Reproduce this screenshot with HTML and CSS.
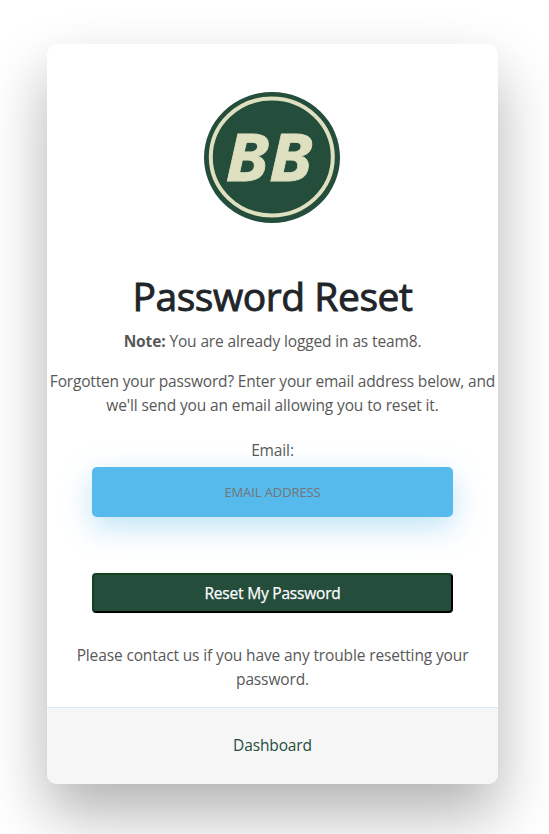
FILE: index.html
```html
<!DOCTYPE html>
<html lang="en">
<head>
<meta charset="utf-8">
<title>Password Reset</title>
<link rel="stylesheet" href="styles.css">
</head>
<body>
<main class="card">
  <svg class="logo" viewBox="0 0 136 131" role="img" aria-label="BB">
    <ellipse cx="68" cy="65.5" rx="68" ry="65.5" fill="#244d3c"/>
    <ellipse cx="67.8" cy="65" rx="61" ry="58.5" fill="none" stroke="#dfe0c0" stroke-width="4"/>
    <text class="logo-text" x="21.5" y="88.5" textLength="87" lengthAdjust="spacingAndGlyphs">BB</text>
  </svg>
  <h1 class="title">Password Reset</h1>
  <p class="note"><b>Note:</b> You are already logged in as team8.</p>
  <p class="intro"><span class="intro-lead">Forgotten your password? Enter your email address below, and</span><br>we'll send you an email allowing you to reset it.</p>
  <form class="form">
    <label class="label" for="email">Email:</label>
    <input class="email" id="email" type="email" placeholder="EMAIL ADDRESS">
    <button class="submit" type="button">Reset My Password</button>
  </form>
  <p class="help">Please contact us if you have any trouble resetting your<br>password.</p>
  <footer class="footer"><a class="link" href="#">Dashboard</a></footer>
</main>
</body>
</html>
```

FILE: styles.css
```css
* { box-sizing: border-box; }
body {
  min-height: 834px;
  margin: 0;
  padding: 44px 51px 50px 47px;
  background: #fff;
  color: #585858;
  font: 15.5px/24px "Open Sans", "Noto Sans", sans-serif;
  letter-spacing: -.13px;
}
.card {
  display: flex;
  flex-direction: column;
  height: 740px;
  border-radius: 10px;
  overflow: hidden;
  background: #fff;
  box-shadow: 0 30px 60px rgba(0, 0, 0, .3);
  text-align: center;
  white-space: nowrap;
}
.logo { display: block; width: 136px; height: 131px; margin: 48px auto 0 157px; }
.logo-text {
  font: italic 700 67px "Open Sans", sans-serif;
  letter-spacing: 0;
  fill: #dfe0c0;
  stroke: #dfe0c0;
  stroke-width: .8px;
}
.title {
  margin: 49px 0 9px;
  color: #212529;
  font-size: 39px;
  font-weight: 400;
  line-height: 48px;
  letter-spacing: -.45px;
  -webkit-text-stroke: .9px #212529;
}
.note { margin: 0 0 16px; }
.intro { margin: 0 0 21px; }
.intro-lead { letter-spacing: -.18px; }
.form { display: flex; flex-direction: column; margin: 0 45px; }
.label { height: 29px; }
.email {
  height: 50px;
  padding: 0;
  border: 0;
  border-radius: 5px;
  background: #56baed;
  box-shadow: 0 10px 30px rgba(95, 186, 233, .4);
  font: 13px "Open Sans", sans-serif;
  letter-spacing: -.1px;
  text-align: center;
}
.email::placeholder { color: #757575; opacity: 1; }
.submit {
  height: 40px;
  margin-top: 56px;
  padding: 0;
  border: 2px solid;
  border-color: #154220 #000 #000 #154220;
  border-radius: 4px;
  background: #244d3c;
  color: #fff;
  font: 15.5px "Open Sans", sans-serif;
  letter-spacing: -.2px;
  -webkit-text-stroke: .25px #fff;
}
.help { margin: 30px 0 0; }
.footer {
  margin-top: auto;
  height: 77px;
  padding-top: 25px;
  border-top: 1px solid #dce8f1;
  background: #f6f6f6;
}
.link { color: #244d3c; text-decoration: none; }
```
